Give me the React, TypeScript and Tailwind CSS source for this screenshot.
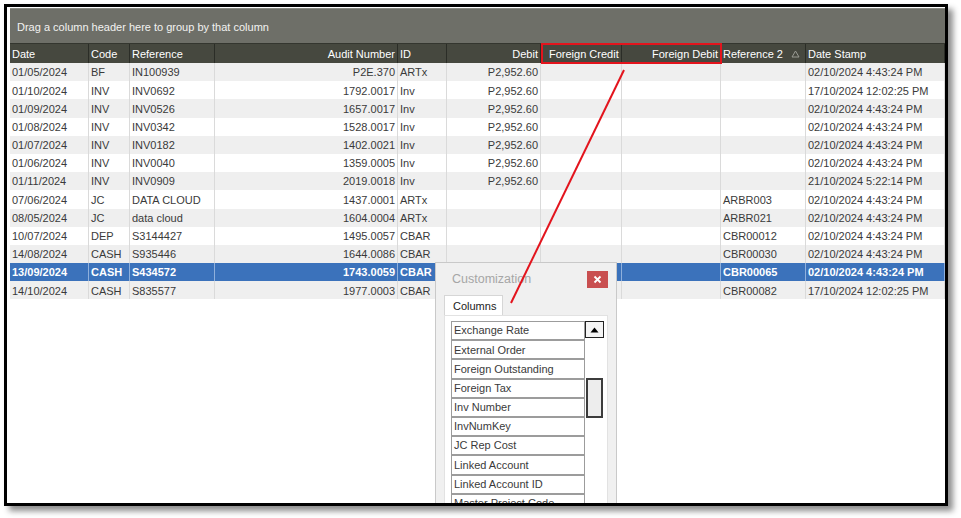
import React from 'react'

type Align = 'left' | 'right'

interface Col {
  key: string
  label: string
  w: number
  align: Align
  headAlign?: Align
}

const cols: Col[] = [
  { key: 'date', label: 'Date', w: 79, align: 'left' },
  { key: 'code', label: 'Code', w: 41, align: 'left' },
  { key: 'ref', label: 'Reference', w: 85, align: 'left' },
  { key: 'audit', label: 'Audit Number', w: 183, align: 'right' },
  { key: 'id', label: 'ID', w: 49, align: 'left' },
  { key: 'debit', label: 'Debit', w: 94, align: 'right' },
  { key: 'fcredit', label: 'Foreign Credit', w: 81, align: 'right', headAlign: 'left' },
  { key: 'fdebit', label: 'Foreign Debit', w: 99, align: 'right' },
  { key: 'ref2', label: 'Reference 2', w: 85, align: 'left' },
  { key: 'stamp', label: 'Date Stamp', w: 139, align: 'left' },
]

type Row = Record<string, string>

const mk = (date: string, code: string, ref: string, audit: string, id: string, debit: string, ref2: string, stamp: string): Row => ({
  date, code, ref, audit, id, debit, fcredit: '', fdebit: '', ref2, stamp,
})

const rows: Row[] = [
  mk('01/05/2024', 'BF', 'IN100939', 'P2E.370', 'ARTx', 'P2,952.60', '', '02/10/2024 4:43:24 PM'),
  mk('01/10/2024', 'INV', 'INV0692', '1792.0017', 'Inv', 'P2,952.60', '', '17/10/2024 12:02:25 PM'),
  mk('01/09/2024', 'INV', 'INV0526', '1657.0017', 'Inv', 'P2,952.60', '', '02/10/2024 4:43:24 PM'),
  mk('01/08/2024', 'INV', 'INV0342', '1528.0017', 'Inv', 'P2,952.60', '', '02/10/2024 4:43:24 PM'),
  mk('01/07/2024', 'INV', 'INV0182', '1402.0021', 'Inv', 'P2,952.60', '', '02/10/2024 4:43:24 PM'),
  mk('01/06/2024', 'INV', 'INV0040', '1359.0005', 'Inv', 'P2,952.60', '', '02/10/2024 4:43:24 PM'),
  mk('01/11/2024', 'INV', 'INV0909', '2019.0018', 'Inv', 'P2,952.60', '', '21/10/2024 5:22:14 PM'),
  mk('07/06/2024', 'JC', 'DATA CLOUD', '1437.0001', 'ARTx', '', 'ARBR003', '02/10/2024 4:43:24 PM'),
  mk('08/05/2024', 'JC', 'data cloud', '1604.0004', 'ARTx', '', 'ARBR021', '02/10/2024 4:43:24 PM'),
  mk('10/07/2024', 'DEP', 'S3144427', '1495.0057', 'CBAR', '', 'CBR00012', '02/10/2024 4:43:24 PM'),
  mk('14/08/2024', 'CASH', 'S935446', '1644.0086', 'CBAR', '', 'CBR00030', '02/10/2024 4:43:24 PM'),
  mk('13/09/2024', 'CASH', 'S434572', '1743.0059', 'CBAR', '', 'CBR00065', '02/10/2024 4:43:24 PM'),
  mk('14/10/2024', 'CASH', 'S835577', '1977.0003', 'CBAR', '', 'CBR00082', '17/10/2024 12:02:25 PM'),
]

const SELECTED = 11

const columnChoices = [
  'Exchange Rate',
  'External Order',
  'Foreign Outstanding',
  'Foreign Tax',
  'Inv Number',
  'InvNumKey',
  'JC Rep Cost',
  'Linked Account',
  'Linked Account ID',
  'Master Project Code',
]

export default function App() {
  return (
    <div className="relative w-[961px] h-[518px] bg-white overflow-hidden font-['Liberation_Sans',Arial,sans-serif] text-[11px]">
      {/* grid window */}
      <div className="absolute left-[4px] top-[4px] w-[944px] h-[502px] border-[3px] border-black bg-white pl-[3px] pt-[1px] shadow-[5px_5px_6px_rgba(0,0,0,0.45)] overflow-hidden">
        <div className="w-[935px] flex flex-col">
          {/* group panel */}
          <div className="h-[35px] bg-[#6e6f68] border-t border-[#8a8b84] flex items-center pl-[7px] pt-[2px] text-[#f2f2f0]">
            Drag a column header here to group by that column
          </div>

          {/* header */}
          <div className="h-[20px] flex bg-[#46483f] border-t border-[#34362f] text-white">
            {cols.map(c => (
              <div
                key={c.key}
                style={{ width: c.w }}
                className={`h-full flex items-center px-[2px] pt-[1px] border-r border-[#2b2d27] shrink-0 whitespace-nowrap overflow-hidden ${(c.headAlign ?? c.align) === 'right' ? 'justify-end' : 'justify-start'} ${c.key === 'fcredit' ? 'pl-[8px]' : ''}`}
              >
                <span>{c.label}</span>
                {c.key === 'ref2' && (
                  <svg className="ml-auto mr-[3px]" width="9" height="8" viewBox="0 0 9 8">
                    <path d="M4.5 1 L8 7 L1 7 Z" fill="none" stroke="#9a9b94" strokeWidth="1" />
                  </svg>
                )}
              </div>
            ))}
          </div>

          {/* rows */}
          {rows.map((r, i) => {
            const sel = i === SELECTED
            const bg = sel ? 'bg-[#3b72bb]' : i % 2 === 0 ? 'bg-[#efefef]' : 'bg-white'
            return (
              <div key={i} className={`h-[18.2px] flex ${bg} ${sel ? 'text-white font-bold' : 'text-[#3a3a3a]'}`}>
                {cols.map(c => (
                  <div
                    key={c.key}
                    style={{ width: c.w }}
                    className={`h-full flex items-center shrink-0 px-[2px] pt-[1px] border-r ${sel ? 'border-[#8fb0dc]' : 'border-[#dadada]'} ${c.align === 'right' ? 'justify-end' : 'justify-start'} whitespace-nowrap overflow-hidden`}
                  >
                    {r[c.key]}
                  </div>
                ))}
              </div>
            )
          })}
        </div>
      </div>

      {/* red highlight around the two header cells */}
      <div className="absolute left-[541px] top-[43px] w-[181px] h-[21px] border-2 border-[#e3141d]" />

      {/* customization window */}
      <div className="absolute left-[435px] top-[262px] w-[182px] h-[241px] bg-[#f0f0f0] border border-[#c9c9c9] border-b-0 overflow-hidden">
        <div className="h-[31px] flex items-center justify-between pl-[16px] pr-[8px] pt-[2px]">
          <span className="text-[12.5px] text-[#a6a6a6]">Customization</span>
          <div className="w-[21px] h-[17px] bg-[#c94f50] flex items-center justify-center">
            <svg width="9" height="9" viewBox="0 0 9 9">
              <path d="M1.5 1.5 L7.5 7.5 M7.5 1.5 L1.5 7.5" stroke="white" strokeWidth="1.8" />
            </svg>
          </div>
        </div>
        <div className="pl-[8px] pt-[1px]">
          <div className="w-[59px] h-[21px] bg-white border border-b-0 border-[#d6d6d6] flex items-center pl-[8px] text-[#222]">
            Columns
          </div>
          <div className="w-[164px] h-[220px] bg-white border border-[#e2e2e2] -mt-px pl-[6px] pt-[5px] flex">
            <div className="w-[134px] flex flex-col">
              {columnChoices.map(name => (
                <div key={name} className="h-[19.2px] shrink-0 border border-[#9c9c9c] bg-white flex items-center pl-[2px] text-[#3a3a3a] whitespace-nowrap overflow-hidden">
                  {name}
                </div>
              ))}
            </div>
            <div className="w-[19px] flex flex-col">
              <div className="h-[17px] border border-[#222] bg-[#f4f4f4] flex items-center justify-center">
                <svg width="9" height="6" viewBox="0 0 9 6">
                  <path d="M4.5 0.5 L8.5 5.5 L0.5 5.5 Z" fill="#000" />
                </svg>
              </div>
              <div className="h-[40px] mt-[40px] w-[17px] mx-px border-2 border-[#3c3c3c] bg-[#ededed]" />
            </div>
          </div>
        </div>
      </div>

      {/* connector line */}
      <svg className="absolute left-0 top-0 pointer-events-none" width="961" height="518">
        <line x1="624" y1="70" x2="511" y2="303" stroke="#e3141d" strokeWidth="2" />
      </svg>
    </div>
  )
}
